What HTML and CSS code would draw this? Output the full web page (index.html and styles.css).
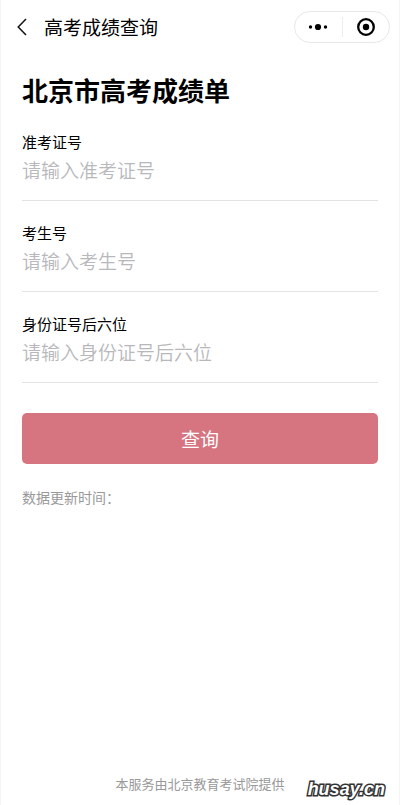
FILE: index.html
```html
<!DOCTYPE html>
<html lang="zh-CN">
<head>
<meta charset="utf-8">
<meta name="viewport" content="width=device-width, initial-scale=1">
<title>高考成绩查询</title>
<link rel="stylesheet" href="styles.css">
</head>
<body>
<div class="page">
  <header class="navbar">
    <button class="icon-button back" type="button" aria-label="返回">
      <svg width="10" height="18" viewBox="0 0 10 18" fill="none" stroke="#111" stroke-width="1.5"><path d="M9 1 1.2 9 9 17"/></svg>
    </button>
    <span class="navbar-title">高考成绩查询</span>
    <div class="capsule">
      <button class="icon-button" type="button" aria-label="更多">
        <svg width="20" height="8" viewBox="0 0 20 8" fill="#000"><circle cx="2.5" cy="4" r="1.7"/><circle cx="10" cy="4" r="3.1"/><circle cx="17.5" cy="4" r="1.7"/></svg>
      </button>
      <button class="icon-button close" type="button" aria-label="关闭">
        <svg width="20" height="20" viewBox="0 0 20 20"><circle cx="10" cy="10" r="7.8" fill="none" stroke="#000" stroke-width="2.3"/><circle cx="10" cy="10" r="3.2"/></svg>
      </button>
    </div>
  </header>
  <main class="content">
    <h1 class="heading">北京市高考成绩单</h1>
    <form class="form">
      <div class="field">
        <label for="ticket">准考证号</label>
        <input id="ticket" type="text" placeholder="请输入准考证号">
      </div>
      <div class="field">
        <label for="candidate">考生号</label>
        <input id="candidate" type="text" placeholder="请输入考生号">
      </div>
      <div class="field">
        <label for="identity">身份证号后六位</label>
        <input id="identity" type="text" placeholder="请输入身份证号后六位">
      </div>
      <button class="submit" type="button">查询</button>
    </form>
    <p class="updated">数据更新时间：</p>
  </main>
  <footer class="footer">本服务由北京教育考试院提供</footer>
  <span class="watermark">husay.cn</span>
</div>
</body>
</html>
```
FILE: styles.css
```css
* {
  box-sizing: border-box;
}

body {
  margin: 0;
  background: #fff;
  color: #000;
  font-family: "Noto Sans CJK SC", sans-serif;
}

button,
input {
  font-family: inherit;
}

.page {
  position: relative;
  display: flex;
  flex-direction: column;
  min-height: 100vh;
  border: solid #f5f5f5;
  border-width: 0 1px;
}

.navbar {
  display: flex;
  align-items: center;
  height: 54px;
  padding: 0 9px 0 15px;
}

.icon-button {
  display: flex;
  align-items: center;
  justify-content: center;
  padding: 0;
  border: 0;
  background: none;
}

.back {
  width: 12px;
  height: 32px;
}

.navbar-title {
  flex: 1;
  margin-left: 16px;
  font-size: 19px;
  line-height: 28px;
}

.capsule {
  display: flex;
  align-items: center;
  width: 96px;
  height: 32px;
  border: 1px solid #e8e8e8;
  border-radius: 16px;
}

.capsule .icon-button {
  flex: 1;
  height: 20px;
}

.capsule .close {
  border-left: 1px solid #eee;
}

.content {
  flex: 1;
  padding: 17px 21px;
}

.heading {
  margin: 0;
  font-size: 26px;
  font-weight: 700;
  line-height: 38px;
}

.form {
  display: flex;
  flex-direction: column;
  margin-top: 10px;
}

.field {
  display: flex;
  flex-direction: column;
  height: 82px;
  padding-top: 12px;
  border-bottom: 1px solid #e4e4e4;
}

.field + .field {
  height: 91px;
  padding-top: 21px;
}

.field label {
  font-size: 15px;
  line-height: 22px;
}

.field input {
  width: 100%;
  height: 32px;
  padding: 0;
  border: 0;
  outline: 0;
  background: none;
  font-size: 19px;
}

.field input::placeholder {
  color: #b8b8bc;
  font-weight: 350;
  opacity: 1;
}

.submit {
  height: 51px;
  margin-top: 30px;
  border: 0;
  border-radius: 5px;
  background: #d6747f;
  color: #fff;
  font-size: 19px;
}

.updated {
  margin: 22px 0 0;
  color: #999;
  font-size: 14px;
  line-height: 22px;
}

.footer {
  padding-bottom: 10px;
  color: #999;
  font-size: 13px;
  line-height: 22px;
  text-align: center;
}

.watermark {
  position: absolute;
  right: 14px;
  bottom: 5px;
  color: #fff;
  font-family: "Liberation Sans", sans-serif;
  font-size: 18px;
  font-style: italic;
  font-weight: 700;
  line-height: 22px;
  -webkit-text-stroke: 3px #333;
  paint-order: stroke fill;
}
```
